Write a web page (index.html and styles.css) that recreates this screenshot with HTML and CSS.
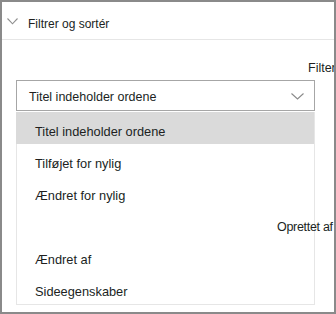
FILE: index.html
```html
<!DOCTYPE html>
<html>
<head>
<meta charset="utf-8">
<link rel="stylesheet" href="styles.css">
</head>
<body>
<div class="frame">
  <div class="header">
    <svg class="hchev" width="11" height="7" viewBox="0 0 11 7"><path d="M0.5 0.5 L5.5 5.8 L10.5 0.5" fill="none" stroke="#8f8f8f" stroke-width="1.1"/></svg>
    <span class="htitle">Filtrer og sortér</span>
  </div>
  <div class="section">
    <div class="label">Filter</div>
    <div class="select">
      <span class="seltext">Titel indeholder ordene</span>
      <svg class="selchev" width="13" height="7" viewBox="0 0 13 7"><path d="M0.5 0.5 L6.5 6 L12.5 0.5" fill="none" stroke="#8a8a8a" stroke-width="1.1"/></svg>
    </div>
    <ul class="list">
      <li class="item active">Titel indeholder ordene</li>
      <li class="item">Tilføjet for nylig</li>
      <li class="item">Ændret for nylig</li>
      <li class="item shifted">Oprettet af</li>
      <li class="item">Ændret af</li>
      <li class="item">Sideegenskaber</li>
    </ul>
  </div>
</div>
</body>
</html>
```

FILE: styles.css
```css
html, body {
  margin: 0;
  padding: 0;
  background: #ffffff;
}
.frame {
  width: 336px;
  height: 314px;
  box-sizing: border-box;
  border: 2px solid #8a8a8a;
  background: #ffffff;
  overflow: hidden;
  font-family: "Liberation Sans", Arial, sans-serif;
  color: #201f1e;
}
.header {
  height: 38px;
  box-sizing: border-box;
  border-bottom: 1px solid #e6e6e6;
  display: flex;
  align-items: flex-start;
  padding: 14px 0 0 5px;
  gap: 10px;
}
.hchev {
  display: block;
  margin-top: 2px;
}
.htitle {
  font-size: 12px;
  line-height: 16px;
}
.section {
  padding-left: 14px;
}
.label {
  height: 40px;
  box-sizing: border-box;
  padding: 20px 0 0 292px;
  font-size: 12.5px;
  line-height: 16px;
  white-space: nowrap;
}
.select {
  width: 299px;
  height: 31px;
  box-sizing: border-box;
  border: 1px solid #a6a6a6;
  display: flex;
  align-items: center;
  justify-content: space-between;
  padding: 2px 10px 0 12px;
}
.seltext {
  font-size: 12.5px;
  line-height: 16px;
  white-space: nowrap;
}
.selchev {
  display: block;
}
.list {
  list-style: none;
  margin: 1px 0 0 0;
  padding: 0;
  width: 299px;
  box-sizing: border-box;
  border: 1px solid #e6e6e6;
  border-top: none;
}
.item {
  height: 32px;
  box-sizing: border-box;
  padding: 6px 0 0 18px;
  display: flex;
  align-items: center;
  font-size: 12.8px;
  white-space: nowrap;
}
.item.active {
  background: #dadada;
  margin-left: -1px;
  padding-left: 19px;
}
.item.shifted {
  padding-left: 260px;
  font-size: 12.5px;
  letter-spacing: -0.3px;
}
```
